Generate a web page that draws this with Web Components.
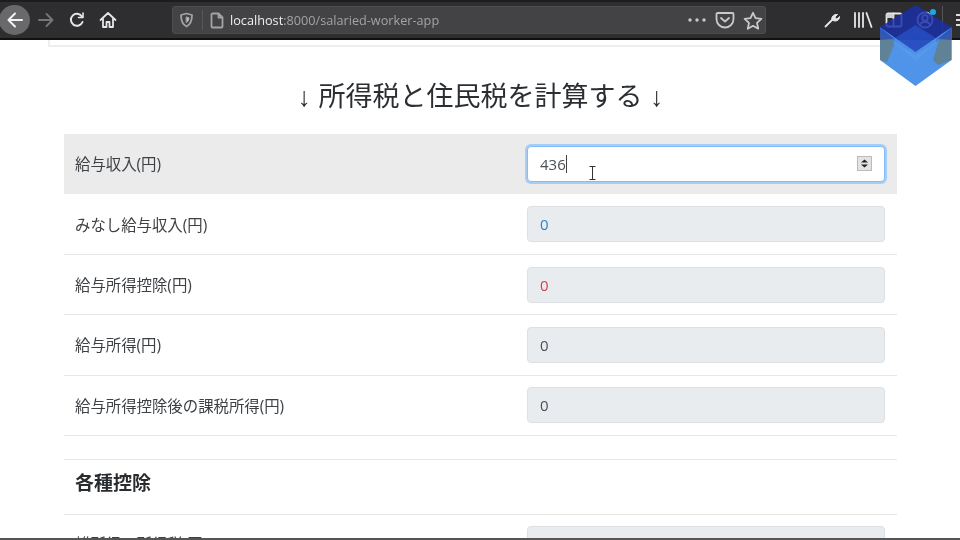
<!DOCTYPE html>
<html lang="ja">
<head>
  <meta charset="UTF-8">
  <title>salaried-worker-app</title>
  <style>
    html, body { margin: 0; height: 540px; overflow: hidden; background: #fff; }
    body { display: flex; flex-direction: column; position: relative; font-family: "Open Sans", "Noto Sans CJK JP", sans-serif; color: #333; }
    app-page { flex: 1; min-height: 0; will-change: transform; }
    browser-bar { will-change: transform; }
    .edge { flex: none; height: 2px; background: #555; }
  </style>
</head>
<body>
  <browser-bar url-host="localhost" url-path=":8000/salaried-worker-app"></browser-bar>
  <app-page>
    <page-title>↓ 所得税と住民税を計算する ↓</page-title>
    <calc-row label="給与収入(円)" active value="436"></calc-row>
    <calc-row label="みなし給与収入(円)" value="0" tone="blue"></calc-row>
    <calc-row label="給与所得控除(円)" value="0" tone="red"></calc-row>
    <calc-row label="給与所得(円)" value="0"></calc-row>
    <calc-row label="給与所得控除後の課税所得(円)" value="0"></calc-row>
    <section-head>各種控除</section-head>
    <calc-row label="雑所得・所得税(円)" value=""></calc-row>
  </app-page>
  <div class="edge"></div>
  <cube-logo></cube-logo>

<script>
  const barTemplate = document.createElement('template');
  barTemplate.innerHTML = `
    <style>
      :host { display: flex; flex: none; align-items: center; box-sizing: border-box; height: 40px; padding-left: 0; background: #2e2e30; border-top: 2px solid #1c1c1e; border-bottom: 2px solid #111; color: #e6e6e6; position: relative; overflow: hidden; }
      .cell { flex: none; width: 31px; height: 30px; display: flex; align-items: center; justify-content: center; position: relative; }
      .nav { margin-left: -1px; display: flex; }
      .back { background: #69696b; border-radius: 50%; }
      svg { display: block; fill: none; stroke: currentColor; stroke-width: 1.8; stroke-linecap: round; stroke-linejoin: round; }
      .urlbar { flex: none; width: 594px; height: 28px; margin-left: 49px; box-sizing: border-box; background: #434346; border: 1px solid #4d4d50; border-radius: 3px; display: flex; align-items: center; font: 12.700px "Open Sans", sans-serif; color: #a3a3a5; }
      .shield { margin-left: 3px; width: 20px; }
      .sep { width: 1px; height: 20px; background: #58585b; margin: 0 6px; }
      .doc { width: 16px; margin-right: 5px; }
      .host { color: #eee; }
      .grow { flex: 1; }
      .tail { flex: none; display: flex; align-items: center; gap: 7px; padding-right: 2px; color: #c9c9cb; }
      .right { margin-left: 50px; display: flex; }
      .menusep { flex: none; width: 1px; height: 28px; background: #555; margin-left: 2px; }
      .burger { margin-left: 13px; color: #ddd; }
      .badge { position: absolute; right: 4px; top: 4px; width: 6px; height: 6px; border-radius: 50%; background: #19a8e8; }
    </style>
    <div class="nav">
      <div class="cell back"><svg width="20" height="20" viewBox="0 0 20 20"><path d="M17 10H3.5M10 3.5 3.5 10l6.5 6.5" stroke="#f2f2f2" stroke-width="2"/></svg></div>
      <div class="cell" style="color:#77777a"><svg width="18" height="18" viewBox="0 0 18 18"><path d="M2 9h13M9.500 3l6 6-6 6"/></svg></div>
      <div class="cell"><svg width="18" height="18" viewBox="0 0 18 18" stroke-width="2"><path d="M14.500 11a6 6 0 1 1-.6-5.500" stroke-width="2"/><path d="M15 2v4.500h-4.500" stroke-width="1.600"/></svg></div>
      <div class="cell"><svg width="18" height="18" viewBox="0 0 18 18"><path d="M1.500 9 9 2l7.500 7M4 7.500V16h3.500v-5h3v5H14V7.500"/></svg></div>
    </div>
    <div class="urlbar">
      <div class="shield cell"><svg width="15" height="16" viewBox="0 0 15 16" stroke="#c8c8ca"><path d="M7.500 1.500 13 3c0 6-1.500 9.500-5.500 11.500C3.500 12.500 2 9 2 3Z"/><path d="M7.500 5 10 5.700c0 2.500-.8 3.800-2.500 4.800Z" fill="#c8c8ca" stroke-width="1"/></svg></div>
      <div class="sep"></div>
      <div class="doc cell"><svg width="14" height="17" viewBox="0 0 14 17" stroke="#d8d8da" stroke-width="1.500"><path d="M2.500 1.500h6l4 4v9a1 1 0 0 1-1 1h-9a1 1 0 0 1-1-1v-12a1 1 0 0 1 1-1ZM8.500 1.500v4h4"/></svg></div>
      <span><span class="host" id="host"></span><span id="path"></span></span>
      <div class="grow"></div>
      <div class="tail">
        <svg width="20" height="8" viewBox="0 0 20 8"><circle cx="3" cy="4" r="1.700" fill="#c9c9cb" stroke="none"/><circle cx="10" cy="4" r="1.700" fill="#c9c9cb" stroke="none"/><circle cx="17" cy="4" r="1.700" fill="#c9c9cb" stroke="none"/></svg>
        <svg width="20" height="18" viewBox="0 0 20 18" style="margin-left:1px"><path d="M2.500 2h15a1 1 0 0 1 1 1v5a8.500 8.500 0 0 1-17 0V3a1 1 0 0 1 1-1Z"/><path d="M6 7l4 3.500L14 7"/></svg>
        <svg width="20" height="19" viewBox="0 0 20 19" style="margin-left:1px"><path d="M10 1.800l2.500 5.400 5.900.7-4.400 4 1.200 5.800L10 14.800l-5.200 2.900L6 11.900l-4.400-4 5.900-.7Z"/></svg>
      </div>
    </div>
    <div class="right">
      <div class="cell"><svg width="18" height="18" viewBox="0 0 18 18" stroke="#e4e4e6" stroke-width="2.400"><path d="M2.500 15.500 9.500 8.500"/><path d="M9 9c-1-3 1.500-6 5.500-5.500L12 6l.5 1.500L14 8l2.500-2.500C16.500 9.500 13 11 10 9.500" fill="#e4e4e6" stroke-width="1"/></svg></div>
      <div class="cell"><svg width="20" height="16" viewBox="0 0 20 16" stroke="#d9d9db" stroke-width="1.700" stroke-linecap="butt"><path d="M2 1v14M6 1v14M10 1v14M13.500 1l5 14"/></svg></div>
      <div class="cell"><svg width="18" height="16" viewBox="0 0 18 16" stroke="#cfcfd1" stroke-width="1.500"><rect x="1.500" y="1.500" width="15" height="13" rx="1.500"/><path d="M8.500 1.500v13"/><path d="M1.500 2h7v4h-7z" fill="#cfcfd1" stroke="none"/></svg></div>
      <div class="cell"><svg width="18" height="18" viewBox="0 0 18 18" stroke="#b9c4dc" stroke-width="1.200"><circle cx="9" cy="9" r="7.500"/><circle cx="9" cy="7" r="2.800"/><path d="M3.800 14c1-2.500 3-3.200 5.200-3.200s4.200.7 5.200 3.200"/></svg><span class="badge"></span></div>
    </div>
    <div class="menusep"></div>
    <div class="burger"><svg width="14" height="14" viewBox="0 0 14 14" stroke-width="1.800" stroke-linecap="butt"><path d="M0 2h14M0 7h14M0 12h14"/></svg></div>
  `;

  class BrowserBar extends HTMLElement {
    constructor() {
      super();
      this.attachShadow({ mode: 'open' });
      this.shadowRoot.appendChild(barTemplate.content.cloneNode(true));
    }
    connectedCallback() {
      this.shadowRoot.getElementById('host').textContent = this.getAttribute('url-host');
      this.shadowRoot.getElementById('path').textContent = this.getAttribute('url-path');
    }
  }

  const pageTemplate = document.createElement('template');
  pageTemplate.innerHTML = `
    <style>
      :host { display: block; overflow: hidden; background: #fff; }
      .card { box-sizing: border-box; width: 864px; height: 7px; margin-left: 48px; border: 2px solid #eee; border-top: 0; }
      .body { padding: 0 15px 0 64px; width: 833px; }
    </style>
    <div class="card"></div>
    <div class="body"><slot></slot></div>
  `;

  class AppPage extends HTMLElement {
    constructor() {
      super();
      this.attachShadow({ mode: 'open' });
      this.shadowRoot.appendChild(pageTemplate.content.cloneNode(true));
    }
  }

  const titleTemplate = document.createElement('template');
  titleTemplate.innerHTML = `
    <style>
      :host { display: flex; align-items: center; justify-content: center; box-sizing: border-box; height: 87.200px; padding-top: 7px; font-family: "Liberation Sans", "Noto Sans CJK JP", sans-serif; font-size: 27px; color: #2b2f33; white-space: nowrap; }
    </style>
    <slot></slot>
  `;

  class PageTitle extends HTMLElement {
    constructor() {
      super();
      this.attachShadow({ mode: 'open' });
      this.shadowRoot.appendChild(titleTemplate.content.cloneNode(true));
    }
  }

  const rowTemplate = document.createElement('template');
  rowTemplate.innerHTML = `
    <style>
      :host { display: grid; grid-template-columns: 452px 358px; align-items: center; box-sizing: border-box; height: 60.250px; padding-left: 11px; border-bottom: 1px solid #e6e6e6; font-size: 15px; color: #3d4145; }
      :host([active]) { height: 60px; margin-bottom: .6px; background: #ebebeb; border-bottom-color: #ebebeb; }
      .label { white-space: nowrap; font-size: 15.400px; }
      .field { box-sizing: border-box; height: 36px; padding: 0 12px; display: flex; align-items: center; background: #e9ecef; border: 1px solid #dcdfe3; border-radius: 4px; color: #495057; }
      :host([active]) .field { background: #fff; border-color: #80bdff; box-shadow: 0 0 0 2px #a9cdf2; }
      .caret { display: none; width: 1px; height: 18px; background: #444; }
      :host([active]) .caret { display: block; }
      .grow { flex: 1; }
      .spin { display: none; width: 15px; height: 15px; box-sizing: border-box; background: #e3e3e3; border: 1px solid #bbb; position: relative; }
      :host([active]) .spin { display: block; }
      .spin svg { display: block; }
      :host([tone="blue"]) .field { color: #2f7fd6; }
      :host([tone="red"]) .field { color: #d5404f; }
    </style>
    <div class="label"></div>
    <div class="field">
      <span class="value"></span><span class="caret"></span>
      <span class="grow"></span>
      <span class="spin"><svg width="13" height="13" viewBox="0 0 13 13"><path d="M6.500 2.500 10 5.500H3ZM6.500 10.500 3 7.500h7Z" fill="#222"/></svg></span>
    </div>
  `;

  class CalcRow extends HTMLElement {
    constructor() {
      super();
      this.attachShadow({ mode: 'open' });
      this.shadowRoot.appendChild(rowTemplate.content.cloneNode(true));
    }
    connectedCallback() {
      this.shadowRoot.querySelector('.label').textContent = this.getAttribute('label');
      this.shadowRoot.querySelector('.value').textContent = this.getAttribute('value');
    }
  }

  const headTemplate = document.createElement('template');
  headTemplate.innerHTML = `
    <style>
      :host { display: flex; align-items: center; box-sizing: border-box; height: 56px; margin: 23px 0 -.5px; padding: 0 0 9px 11px; border-top: 1px solid #e6e6e6; border-bottom: 1px solid #e6e6e6; font-size: 19px; font-weight: 700; color: #2a2d30; }
    </style>
    <slot></slot>
  `;

  class SectionHead extends HTMLElement {
    constructor() {
      super();
      this.attachShadow({ mode: 'open' });
      this.shadowRoot.appendChild(headTemplate.content.cloneNode(true));
    }
  }

  const logoTemplate = document.createElement('template');
  logoTemplate.innerHTML = `
    <style>
      :host { position: absolute; left: 880px; top: 5px; width: 72px; height: 81px; display: block; }
      svg { display: block; }
    </style>
    <svg width="72" height="81" viewBox="0 0 72 81">
      <path d="M0 22 35.500 47 71.500 22V55L35.500 81 0 55Z" fill="#4f94e8"/>
      <path d="M0 24 12 32 14 40 7 57 0 55ZM71.500 24 60 32 53 55 58 60 71.500 55Z" fill="#5f8296"/>
      <path d="M35.500 47 55 34 71.500 24V27L35.500 50 0 27V24L16 34Z" fill="#3f7fdc"/>
      <path d="M35.500 0 71.500 22 35.500 47 0 22Z" fill="#1a30a8" fill-opacity=".84"/>
      <path d="M35.500 20 56 33 35.500 47 15 33Z" fill="#2650c4" fill-opacity=".8"/>
      <path d="M0 22V35L14 34 0 22ZM71.500 22V35L58 34Z" fill="#1c35b0" fill-opacity=".55"/>
      <path d="M15 33 35.500 47 56 33 56 38 35.500 56 15 38Z" fill="#5a9eee" fill-opacity=".55"/>
    </svg>
  `;

  class CubeLogo extends HTMLElement {
    constructor() {
      super();
      this.attachShadow({ mode: 'open' });
      this.shadowRoot.appendChild(logoTemplate.content.cloneNode(true));
    }
  }

  const cursorTemplate = document.createElement('template');
  cursorTemplate.innerHTML = `
    <style>
      :host { position: absolute; left: 588px; top: 166px; width: 9px; height: 14px; display: block; }
      svg { display: block; }
    </style>
    <svg width="9" height="14" viewBox="0 0 9 14" fill="none" stroke="#333" stroke-width="1"><path d="M1.500 .5h6M4.500 .5v13M1.500 13.500h6"/></svg>
  `;

  class TextCursor extends HTMLElement {
    constructor() {
      super();
      this.attachShadow({ mode: 'open' });
      this.shadowRoot.appendChild(cursorTemplate.content.cloneNode(true));
    }
  }

  customElements.define('browser-bar', BrowserBar);
  customElements.define('app-page', AppPage);
  customElements.define('page-title', PageTitle);
  customElements.define('calc-row', CalcRow);
  customElements.define('section-head', SectionHead);
  customElements.define('cube-logo', CubeLogo);
  customElements.define('text-cursor', TextCursor);

  document.body.appendChild(document.createElement('text-cursor'));
</script>
</body>
</html>
